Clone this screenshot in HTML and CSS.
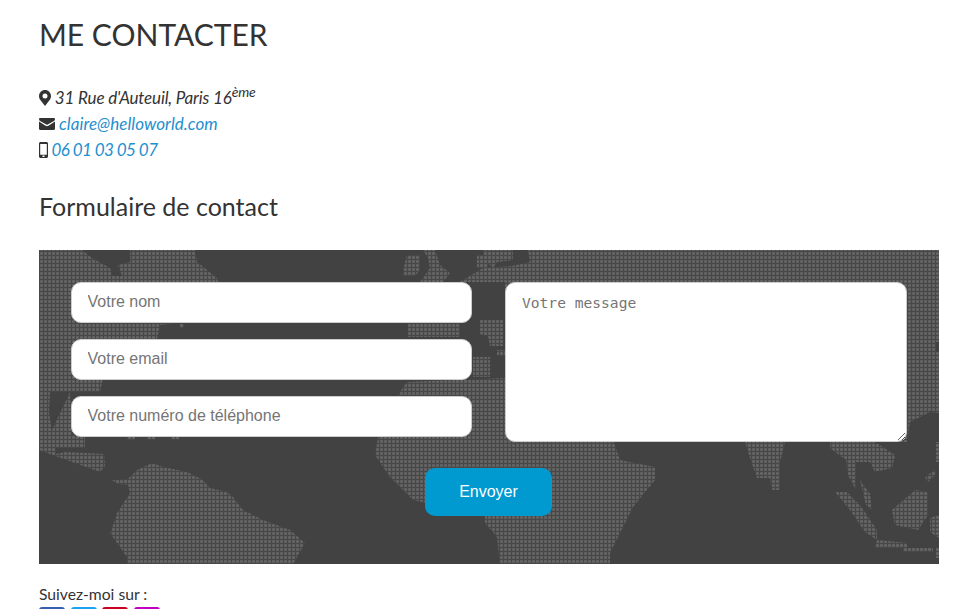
FILE: index.html
```html
<!DOCTYPE html>
<html lang="fr">
<head>
  <meta charset="UTF-8" />
  <meta name="viewport" content="width=device-width, initial-scale=1" />
  <title>Me contacter</title>
  <link rel="stylesheet" href="styles.css">
</head>
<body>
  <h1>ME CONTACTER</h1>

  <div class="coords">
    <div class="address">
      <svg class="icon" width="12" height="16" viewBox="0 0 12 16"><path fill-rule="evenodd" d="M6 0C2.7 0 0 2.7 0 6c0 1.3.3 2.2.8 3.2L6 16l5.2-6.8c.5-1 .8-1.9.8-3.2 0-3.300-2.700-6-6-6zm0 8.500a2.500 2.500 0 1 1 0-5 2.500 2.500 0 0 1 0 5z"/></svg>
      31 Rue d'Auteuil, Paris 16<sup>ème</sup>
    </div>
    <div class="email">
      <svg class="icon icon-mail" width="16" height="12" viewBox="0 0 16 12"><path d="M1.200 0h13.600c.7 0 1.200.5 1.200 1.200 0 .7-.5 1.300-1 1.700L8.700 6.600c-.4.3-1 .3-1.400 0L1 2.900C.5 2.500 0 1.900 0 1.200 0 .5.5 0 1.200 0zM0 3.600l6.600 4.200c.9.6 1.900.6 2.800 0L16 3.600v7.200c0 .7-.5 1.200-1.200 1.200H1.200C.5 12 0 11.500 0 10.800z"/></svg>
      <a href="#">claire@helloworld.com</a>
    </div>
    <div class="phone">
      <svg class="icon" width="9" height="16" viewBox="0 0 9 16"><path fill-rule="evenodd" d="M1.500 0h6C8.300 0 9 .7 9 1.500v13c0 .8-.7 1.500-1.500 1.500h-6C.7 16 0 15.300 0 14.500v-13C0 .7.7 0 1.500 0zM1.200 2v10.800h6.600V2zM3.500 13.500V15h2v-1.500z"/></svg>
      <a href="#">06 01 03 05 07</a>
    </div>
  </div>

  <h3>Formulaire de contact</h3>

  <form class="contact-form">
    <!-- world map, dots on a 4px grid -->
    <svg class="map" width="900" height="314" viewBox="0 0 900 314">
      <defs>
        <pattern id="dots" width="4" height="4" patternUnits="userSpaceOnUse">
          <rect width="4" height="4" fill="#484848"/>
          <rect width="3" height="3" fill="#585858"/>
          <rect x="0.5" y="0.5" width="2" height="2" fill="#6a6a6a"/>
        </pattern>
      </defs>
      <g transform="translate(-39 -250)" fill="url(#dots)">
        <!-- north america -->
        <polygon points="39,250 82,250 92,258 110,268 112,276 122,276 118,265 130,262 130,250 195,250 197,262 217,278 225,300 190,322 160,325 157,339 110,345 100,392 50,392 48,430 39,432"/>
        <polygon points="39,432 85,436 85,448 56,448 56,454 66,452 104,454 105,466 100,472 39,450"/>
        <polygon points="70,392 72,438 39,438 39,392 46,396 52,430"/>
        <rect x="180" y="324" width="4" height="4"/>
        <polygon points="100,472 112,480 150,478 150,486 118,484"/>
        <rect x="127" y="436" width="8" height="4"/>
        <rect x="147" y="436" width="8" height="4"/>
        <rect x="171" y="436" width="8" height="4"/>
        <!-- south america -->
        <polygon points="152,463 163,467 187,472 203,480 210,488 227,492 233,497 243,510 263,520 290,530 305,543 293,564 127,564 127,557 110,533 115,520 117,513 130,493 127,480 137,470"/>
        <!-- europe, islands -->
        <polygon points="407,255 420,255 420,270 415,276 403,276 403,270"/>
        <polygon points="423,250 435,250 440,265 450,273 443,282 420,282 430,268 428,258"/>
        <polygon points="477,255 488,255 488,268 477,268"/>
        <polygon points="483,250 513,250 513,260 497,262 493,268 483,258"/>
        <!-- asia and the top right -->
        <polygon points="528,250 939,250 939,342 936,342 936,352 939,352 939,413 930,412 910,422 907,442 505,442 505,282 460,282 483,268 512,266 530,262"/>
        <polygon points="480,320 503,320 503,346 490,346 488,336 480,334"/>
        <polygon points="408,323 460,323 460,337 408,337"/>
        <polygon points="473,357 490,357 490,377 473,377"/>
        <rect x="497" y="350" width="8" height="6"/>
        <!-- africa -->
        <polygon points="407,382 505,378 505,440 613,440 620,460 655,467 655,480 633,507 610,553 610,564 500,564 497,537 485,523 485,516 413,500 390,477 375,455 378,438 400,392"/>
        <!-- india, south east asia -->
        <polygon points="745,442 785,442 780,462 780,490 772,490 770,478 757,478 750,458"/>
        <polygon points="830,442 875,442 895,455 892,468 875,472 870,462 856,462 856,490 848,475 846,460 830,448"/>
        <polygon points="835,492 847,492 860,505 877,530 877,540 865,532 850,510"/>
        <polygon points="860,480 870,494 872,510 866,505"/>
        <polygon points="877,540 907,543 907,548 875,548"/>
        <rect x="903" y="548" width="30" height="4"/>
        <polygon points="892,510 915,490 928,492 928,515 918,530 895,525"/>
        <rect x="936" y="442" width="3" height="20"/>
        <polygon points="930,518 939,515 939,538 930,532"/>
        <polygon points="925,478 934,470 936,474 928,482"/>
        <rect x="936" y="548" width="3" height="10"/>
      </g>
    </svg>

    <div class="fields">
      <div class="inputs">
        <input type="text" placeholder="Votre nom" />
        <input type="email" placeholder="Votre email" />
        <input type="tel" placeholder="Votre numéro de téléphone" />
      </div>
      <textarea placeholder="Votre message"></textarea>
    </div>
    <button type="submit">Envoyer</button>
  </form>

  <p class="follow">Suivez-moi sur :</p>
  <div class="socials">
    <a href="#" class="facebook"></a>
    <a href="#" class="twitter"></a>
    <a href="#" class="pinterest"></a>
    <a href="#" class="instagram"></a>
  </div>
</body>
</html>
```

FILE: styles.css
```css
html, body {
  height: 609px;
  overflow: hidden;
}
body {
  margin: 0;
  padding: 0 27px 0 39px;
  font-family: Lato, sans-serif;
  font-size: 16px;
  color: #333;
  background-color: #fff;
}
h1 {
  margin: 14px 0 31px;
  font-size: 30px;
  font-weight: 400;
  line-height: 40px;
}
h3 {
  margin: 28px 0 29px;
  font-size: 25px;
  font-weight: 400;
  line-height: 30px;
}
.coords {
  font-size: 17px;
  font-style: italic;
  line-height: 26px;
}
.coords sup {
  line-height: 0;
  font-size: 14px;
}
.coords a {
  color: #1f8fce;
  text-decoration: none;
}
.address {
  letter-spacing: -0.15px;
}
.email {
  letter-spacing: 0.05px;
}
.phone {
  letter-spacing: -0.55px;
}
.icon {
  fill: #333;
  vertical-align: -2px;
}
.icon-mail {
  vertical-align: 0;
}
.contact-form {
  position: relative;
  display: flex;
  flex-direction: column;
  align-items: center;
  height: 314px;
  box-sizing: border-box;
  padding: 32px;
  background-color: #424242;
}
.map {
  position: absolute;
  top: 0;
  left: 0;
}
.fields {
  position: relative;
  display: flex;
  justify-content: space-between;
  width: 100%;
}
.inputs {
  display: flex;
  flex-direction: column;
  gap: 16px;
  width: 401px;
}
input, textarea {
  box-sizing: border-box;
  background: #fff;
  border: 1px solid #ccc;
  border-radius: 10px;
}
input {
  width: 100%;
  height: 41px;
  padding: 0 16px 2px 15.5px;
  font-family: "Liberation Sans", Arial, sans-serif;
  font-size: 16px;
}
textarea {
  width: 402px;
  height: 160px;
  padding: 11px 16px;
  font-family: "DejaVu Sans Mono", monospace;
  font-size: 14.6px;
}
input::placeholder, textarea::placeholder {
  color: #757575;
}
button {
  position: relative;
  width: 127px;
  height: 48px;
  margin: 26px 1px 0 0;
  font-family: "Liberation Sans", Arial, sans-serif;
  font-size: 16px;
  color: white;
  background-color: #0099d0;
  border: none;
  border-radius: 10px;
  cursor: pointer;
}
.follow {
  margin: 19px 0 2px;
  font-size: 15.7px;
  line-height: 22px;
}
.socials {
  display: flex;
  gap: 5.5px;
}
.socials a {
  width: 26px;
  height: 26px;
  border-radius: 3px;
}
.facebook { background-color: #3b5fb0; }
.twitter { background-color: #1da1f2; }
.pinterest { background-color: #cb0020; }
.instagram { background-color: #c000c0; }
```
